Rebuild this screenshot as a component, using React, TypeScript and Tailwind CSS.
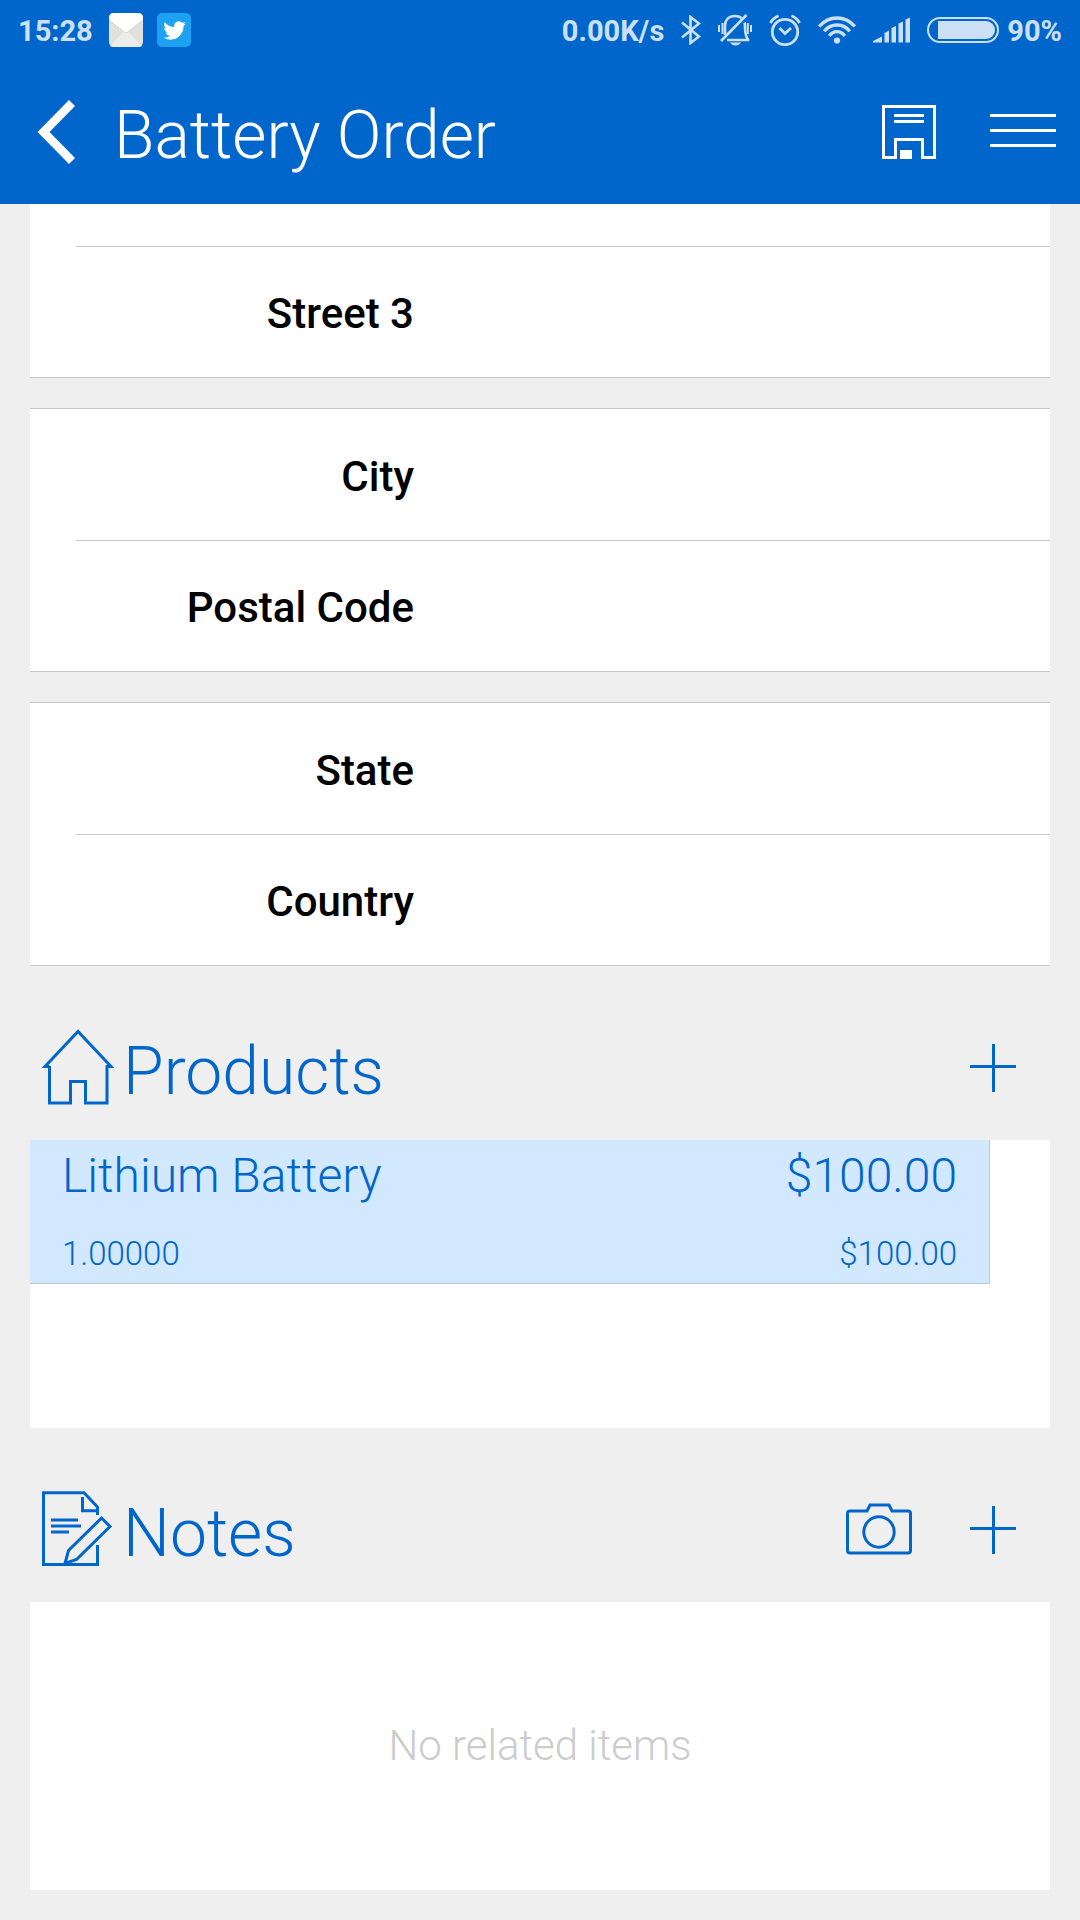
import type { ReactNode } from "react";

const MailIcon = () => (
  <svg width="34" height="34" viewBox="0 0 34 34">
    <rect width="34" height="34" rx="5" fill="#e0e0de" />
    <path d="M1 33L14 19.500Q17 17.500 20 19.500L33 33Q31.500 34 29 34H5Q2.500 34 1 33Z" fill="#ececec" />
    <path d="M0 7V5Q0 0 5 0H29Q34 0 34 5V7L20 18Q17 21 14 18Z" fill="#fff" />
    <path d="M0 7L14 18Q17 21 20 18L34 7" fill="none" stroke="#b9b9b6" strokeWidth="1" strokeDasharray="1 1" />
  </svg>
);

const TwitterIcon = () => (
  <svg width="34" height="34" viewBox="0 0 34 34">
    <rect width="34" height="34" rx="5" fill="#1da1f2" />
    <path
      transform="translate(6.300 6.200) scale(.94)"
      fill="#fff"
      d="M23.953 4.570a10 10 0 01-2.825.775 4.958 4.958 0 002.163-2.723c-.951.555-2.005.959-3.127 1.184a4.920 4.920 0 00-8.384 4.482C7.690 8.095 4.067 6.130 1.640 3.162a4.822 4.822 0 00-.666 2.475c0 1.710.870 3.213 2.188 4.096a4.904 4.904 0 01-2.228-.616v.060a4.923 4.923 0 003.946 4.827 4.996 4.996 0 01-2.212.085 4.936 4.936 0 004.604 3.417 9.867 9.867 0 01-6.102 2.105c-.390 0-.779-.023-1.170-.067a13.995 13.995 0 007.557 2.209c9.053 0 13.998-7.496 13.998-13.985 0-.210 0-.420-.015-.630A9.935 9.935 0 0024 4.590z"
    />
  </svg>
);

const BluetoothIcon = () => (
  <svg width="20" height="30" viewBox="0 0 20 30" fill="none" stroke="currentColor" strokeWidth="2.600">
    <path d="M1 7.500L18 21.500L9.500 28V2L18 8.500L1 22.500" />
  </svg>
);

const MuteIcon = () => (
  <svg width="34" height="32" viewBox="0 0 34 32" fill="none" stroke="currentColor" strokeWidth="2.600">
    <path d="M7 21V12C7 5.500 11 2 17 2C19.500 2 22 2.700 23.500 4M26.500 8.500C27 10 27 11 27 13C27 19 27.500 22 30 25.500V26H9" />
    <path d="M28.500 1L3 27" />
    <path d="M12 28.500H23Q21 31.500 17.500 31.500T12 28.500Z" fill="currentColor" stroke="none" />
    <path d="M1 11V18M4.500 9V20M33 11V18M29.800 9V20" strokeWidth="2" />
  </svg>
);

const AlarmIcon = () => (
  <svg width="32" height="32" viewBox="0 0 32 32" fill="none" stroke="currentColor" strokeWidth="2.800">
    <circle cx="16" cy="18" r="12.700" />
    <path d="M10.500 14L16 19.500L22 14" />
    <path d="M1.500 9Q4 4 9.500 1.800M30.500 9Q28 4 22.500 1.800" />
  </svg>
);

const WifiIcon = () => (
  <svg width="38" height="28" viewBox="0 0 38 28" fill="none" stroke="currentColor" strokeWidth="3.400">
    <path d="M1.200 10.500Q8.500 2 19 2T36.800 10.500M6.200 15.300Q11 9 19 9T31.800 15.300M11.200 20Q14.500 15.600 19 15.600T26.800 20" />
    <circle cx="19" cy="24.500" r="3.100" fill="currentColor" stroke="none" />
  </svg>
);

const SignalIcon = () => (
  <svg width="37" height="26" viewBox="0 0 37 26" fill="currentColor">
    <path d="M0 25.500V24L9 19.500V25.500ZM11.500 25.500V16L16 13.500V25.500ZM18.500 25.500V11L23 9V25.500ZM25.500 25.500V6.500L30 4.500V25.500ZM32.500 25.500V2.500L37 .5V25.500Z" />
  </svg>
);

const BatteryIcon = () => (
  <svg width="72" height="26" viewBox="0 0 72 26">
    <rect x="1" y="1" width="70" height="24" rx="12" fill="none" stroke="currentColor" strokeWidth="2" />
    <path d="M11 4H59A9 9 0 0 1 59 22H11Z" fill="currentColor" />
  </svg>
);

const BackIcon = () => (
  <svg width="40" height="66" viewBox="0 0 40 66" fill="none" stroke="#fff" strokeWidth="8.500">
    <path d="M35 4L6.500 33L35 62" />
  </svg>
);

const SaveIcon = () => (
  <svg width="54" height="54" viewBox="0 0 54 54" fill="none" stroke="#fff" strokeWidth="3">
    <path d="M1.500 1.500H52.500V52.500H40.500V34.500H13.500V52.500H1.500Z" />
    <path d="M12 10.500H42M12 16.500H42" />
    <rect x="18" y="45" width="12" height="9" fill="#fff" stroke="none" />
  </svg>
);

const MenuIcon = () => (
  <svg width="66" height="38" viewBox="0 0 66 38" stroke="#fff" strokeWidth="3">
    <path d="M0 2.500H66M0 17.500H66M0 32.500H66" />
  </svg>
);

const HomeIcon = () => (
  <svg width="72" height="76" viewBox="0 0 72 76" fill="none" stroke="currentColor" strokeWidth="3">
    <path d="M7.500 37.500H3L36 2.500L69 37.500H65V74H43.500V52.500H28.500V74H7.500V37" />
  </svg>
);

const NoteIcon = () => (
  <svg width="72" height="76" viewBox="0 0 72 76" fill="none" stroke="currentColor" strokeWidth="3">
    <path d="M55.500 24V16L42 1.800H1.500V73.500H55.500V54" />
    <path d="M40.500 6V19.800H55.500" />
    <path d="M9 29H36M9 35H39M9 41H27" />
    <path d="M59.500 27L68 35.500L34.500 68.500L23 72.500L26.500 59.500Z" />
  </svg>
);

const CameraIcon = () => (
  <svg width="66" height="52" viewBox="0 0 66 52" fill="none" stroke="currentColor" strokeWidth="3">
    <path d="M4 8H21L24 2H43L46 8H62Q64.500 8 64.500 10.500V47.500Q64.500 50 62 50H4Q1.500 50 1.500 47.500V10.500Q1.500 8 4 8Z" />
    <circle cx="33" cy="29" r="15.200" />
  </svg>
);

const PlusIcon = () => (
  <svg width="46" height="50" viewBox="0 0 46 50" stroke="currentColor" strokeWidth="3">
    <path d="M0 24.500H46M23.500 2V50" />
  </svg>
);

const StatusBar = () => (
  <div className="flex h-15 items-center justify-between px-[18px] text-[29px] leading-none font-bold text-[#cce0f5]">
    <div className="flex items-center">
      <span className="mr-4 pt-[2px]">15:28</span>
      <div className="flex gap-[14px]">
        <MailIcon />
        <TwitterIcon />
      </div>
    </div>
    <div className="flex items-center gap-[17px]">
      <span className="pt-[2px]">0.00K/s</span>
      <BluetoothIcon />
      <MuteIcon />
      <AlarmIcon />
      <WifiIcon />
      <SignalIcon />
      <div className="flex items-center gap-2">
        <BatteryIcon />
        <span className="pt-[2px]">90%</span>
      </div>
    </div>
  </div>
);

const Field = ({ id, label }: { id: string; label: string }) => (
  <div className="flex h-[130px] items-center pt-[2px]">
    <label htmlFor={id} className="w-96 shrink-0 text-right text-[42px] font-medium text-black">
      {label}
    </label>
    <input id={id} type="text" className="mx-8 h-20 min-w-0 flex-1 text-[42px] outline-none" />
  </div>
);

const Divider = () => <div className="ml-[46px] h-px bg-[#c8c8c8]" />;

type SectionProps = {
  title: string;
  icon: ReactNode;
  actions: ReactNode;
  children: ReactNode;
};

const Section = ({ title, icon, actions, children }: SectionProps) => (
  <section>
    <div className="flex h-[174px] items-center pt-7 pl-3 pr-[34px] text-[#0066cc]">
      {icon}
      <h2 className="ml-[9px] flex-1 pt-[10px] text-[66px] leading-none font-light">{title}</h2>
      <div className="flex items-center gap-[58px]">{actions}</div>
    </div>
    <div className="min-h-72 bg-white">{children}</div>
  </section>
);

const fieldGroups = [
  [
    { id: "city", label: "City" },
    { id: "postal-code", label: "Postal Code" },
  ],
  [
    { id: "state", label: "State" },
    { id: "country", label: "Country" },
  ],
];

const products = [
  { name: "Lithium Battery", price: "$100.00", quantity: "1.00000", total: "$100.00" },
];

const App = () => {
  return (
    <div className="min-h-screen bg-[#efefef] font-['Roboto',sans-serif]">
      <header className="bg-[#0066cc] text-white">
        <StatusBar />
        <div className="flex h-36 items-center pl-[37px] pr-6">
          <button type="button" aria-label="Back">
            <BackIcon />
          </button>
          <h1 className="ml-[37px] flex-1 pt-2 text-[66px] leading-none font-light">Battery Order</h1>
          <div className="flex items-center gap-[54px]">
            <button type="button" aria-label="Save">
              <SaveIcon />
            </button>
            <button type="button" aria-label="Menu">
              <MenuIcon />
            </button>
          </div>
        </div>
      </header>

      <main className="px-[30px] pb-[30px]">
        <form>
          <div className="border-b border-[#c8c8c8] bg-white pt-[42px]">
            <Divider />
            <Field id="street-3" label="Street 3" />
          </div>
          {fieldGroups.map(([first, second]) => (
            <div key={first.id} className="mt-[30px] border-y border-[#c8c8c8] bg-white pt-px">
              <Field {...first} />
              <Divider />
              <Field {...second} />
            </div>
          ))}
        </form>

        <Section
          title="Products"
          icon={<HomeIcon />}
          actions={
            <button type="button" aria-label="Add product">
              <PlusIcon />
            </button>
          }
        >
          <ul className="pr-[60px]">
            {products.map((product) => (
              <li
                key={product.name}
                className="h-36 border-r border-b border-[#bcc6d0] bg-[#d2e8ff] px-8 font-light text-[#0066cc]"
              >
                <div className="flex justify-between text-[48px] leading-[72px]">
                  <span>{product.name}</span>
                  <span>{product.price}</span>
                </div>
                <div className="flex justify-between pt-[6px] text-[33px] leading-[72px]">
                  <span>{product.quantity}</span>
                  <span>{product.total}</span>
                </div>
              </li>
            ))}
          </ul>
        </Section>

        <Section
          title="Notes"
          icon={<NoteIcon />}
          actions={
            <>
              <button type="button" aria-label="Take photo">
                <CameraIcon />
              </button>
              <button type="button" aria-label="Add note">
                <PlusIcon />
              </button>
            </>
          }
        >
          <p className="text-center text-[42px] leading-[288px] font-light text-[#cccccc]">No related items</p>
        </Section>
      </main>
    </div>
  );
};

export default App;
